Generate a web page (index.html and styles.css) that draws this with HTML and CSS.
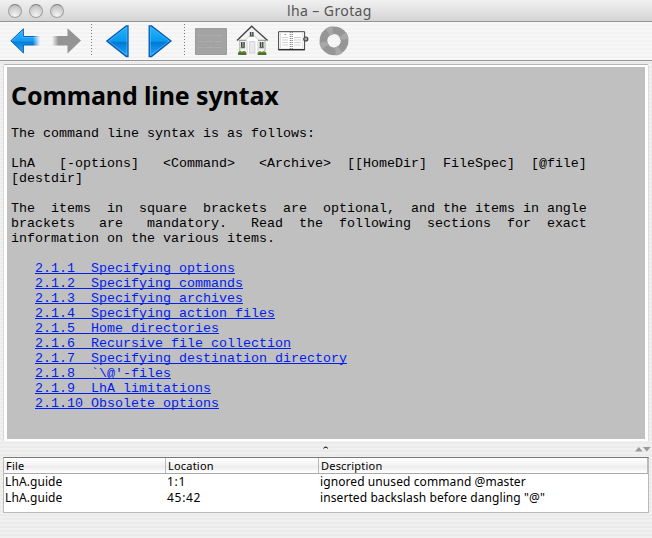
FILE: index.html
```html
<!DOCTYPE html>
<html lang="en">
<head>
<meta charset="utf-8">
<title>lha – Grotag</title>
<link rel="stylesheet" href="styles.css">
</head>
<body>
<div class="window">
  <header class="titlebar">
    <div class="lights"><i></i><i></i><i></i></div>
    <span class="title">lha – Grotag</span>
  </header>
  <nav class="toolbar">
    <svg class="back" width="30" height="26" viewBox="0 0 30 26">
      <defs>
        <linearGradient id="blue" x1="0" y1="0" x2="0" y2="1"><stop offset="0" stop-color="#35b8ff"/><stop offset=".5" stop-color="#1599ee"/><stop offset=".56" stop-color="#077fd8"/><stop offset="1" stop-color="#28adff"/></linearGradient>
        <linearGradient id="tail" x1="0" x2="1"><stop offset=".76" stop-color="#fff"/><stop offset="1" stop-color="#000"/></linearGradient>
        <mask id="fade"><rect width="30" height="26" fill="url(#tail)"/></mask>
      </defs>
      <g mask="url(#fade)"><path d="M.8 12.8 13.4.8V8.5H30V17H13.4v8Z" fill="url(#blue)" stroke="#0b62bd"/><path d="M2.3 12.8 12.4 3.2V9.5H30" fill="none" stroke="#4fbfff" stroke-width=".6"/></g>
    </svg>
    <svg class="forward" width="30" height="26" viewBox="0 0 30 26"><defs><linearGradient id="grey" x1="0" x2="1"><stop offset="0" stop-color="#949494" stop-opacity="0"/><stop offset=".22" stop-color="#949494"/></linearGradient></defs><path d="M0 8H15.5V.3L29 12.6 15.5 25.5V17.5H0Z" fill="url(#grey)"/></svg>
    <i class="divider"></i>
    <svg class="prev" width="24" height="33" viewBox="0 0 24 33"><defs><linearGradient id="tri" x1="0" y1="0" x2="0" y2="1"><stop offset="0" stop-color="#25b7ff"/><stop offset=".5" stop-color="#0898ee"/><stop offset=".54" stop-color="#0077d4"/><stop offset="1" stop-color="#20aaff"/></linearGradient></defs><path d="M.8 16 20.3.9H22V31.5H20.3Z" fill="url(#tri)" stroke="#0759b4" stroke-width="1.3"/><path d="M2.8 16 20.8 2V30Z" fill="none" stroke="#55b5f2" stroke-width=".7"/></svg>
    <svg class="next" width="24" height="33" viewBox="0 0 24 33"><path d="M23 16 3.5.9H1.2V31.5H3.5Z" fill="url(#tri)" stroke="#0759b4" stroke-width="1.3"/><path d="M21.2 16 2.5 2V30Z" fill="none" stroke="#55b5f2" stroke-width=".7"/></svg>
    <i class="divider second"></i>
    <svg class="contents" width="32" height="27" viewBox="0 0 32 27"><path d="M.5.5h31v26H.5Z" fill="#a3a3a3" stroke="#9c9c9c"/><path d="M3 7.5h4m1 0h7m1 0h11M3 13.5h6m1 0h8m2 0h7M3 19.5h5m2 0h8m1 0h8" stroke="#adadad"/></svg>
    <svg class="home" width="33" height="31" viewBox="0 0 33 31">
      <path d="M3.5 14.5 16 2 29.5 14.5V28H3.5Z" fill="#f4f4f5"/>
      <path d="M10 14.5 16 9 22.5 14.5V28H10Z" fill="#fff"/>
      <path d="M3 15.3h7.5m11.5 0h8" stroke="#8a8a8a"/>
      <path d="M3.8 15v11M29 15v11" stroke="#999" stroke-width=".8"/>
      <path d="M1 15.5 15.7 1.3 31.6 15.5" fill="none" stroke="#444" stroke-width="1.4"/>
      <path d="M9.7 14.8 16 9l6.8 5.8" fill="none" stroke="#b8b8bc" stroke-width=".7"/>
      <path d="M11 16v12m11-12v12" stroke="#ccc"/><path d="M13.5 16.5H19V28h-5.5Z" fill="#e9e9ec" stroke="#c6c6cc" stroke-width=".7"/>
      <path d="M13.8 7h3.8v4h-3.8ZM5 17h3.8v6H5Zm18.7 0h3.8v6h-3.8Z" fill="#454a46"/><path d="M15.7 7v3.5M6.9 17v5M25.6 17v5" stroke="#d5d5d5" stroke-width=".8"/><path d="M13.6 11.3h4.2M4.7 22.8h4.4M23.4 22.8h4.4" stroke="#6b8150"/>
      <path d="M2 29.4c-.5-2.8 2.2-4.4 4-2.5 1.7-2 4.7-.5 4.5 2.5Zm19.5 0c0-2.7 3-4.2 4.3-2.1 2-2.3 5-.3 4.6 2.1Z" fill="#5b8425"/><path d="M2.3 29.2h8m11.5 0h8.5" stroke="#30491c"/>
    </svg>
    <svg class="book" width="31" height="20" viewBox="0 0 31 20">
      <path d="M.6.7h26v18H.6Z" fill="#fff" stroke="#444"/><path d="M.3 18.6h26.5" stroke="#2c2c2c" stroke-width="1.4"/><path d="M2.5 1.8V17M24.8 1.8V17" stroke="#ddd"/>
      <path d="M4 6.5h6m6 0h7M4 9h6m6 0h7M4 11.5h6m6 0h7M4 14h6m6 0h7" stroke="#d2d2d2"/><path d="M6.5 3.5h1.5m10.500h1.500" stroke="#999"/><path d="M13.3 1v17" stroke="#777" stroke-width="3" stroke-dasharray=".9 1.1"/><path d="M13.3 1v17" stroke="#f2f2f2" stroke-width=".8"/><circle cx="27.8" cy="8" r="2" fill="#aaa" stroke="#444" stroke-width="1.2"/>
    </svg>
    <svg class="ring" width="32" height="32" viewBox="0 0 32 32"><circle cx="15" cy="15.8" r="10.6" fill="none" stroke="#969696" stroke-width="7.6"/><circle cx="15" cy="15.8" r="10.6" fill="none" stroke="#a8a8a8" stroke-width="8.4" pathLength="360" stroke-dasharray="27 63" stroke-dashoffset="35"/></svg>
  </nav>
  <main class="document">
    <h1>Command line syntax</h1>
<pre>The command line syntax is as follows:

LhA   [-options]   &lt;Command&gt;   &lt;Archive&gt;  [[HomeDir]  FileSpec]  [@file]
[destdir]

The  items  in  square  brackets  are  optional,  and the items in angle
brackets   are   mandatory.   Read  the  following  sections  for  exact
information on the various items.
</pre>
    <ul>
      <li><a>2.1.1  Specifying options</a></li>
      <li><a>2.1.2  Specifying commands</a></li>
      <li><a>2.1.3  Specifying archives</a></li>
      <li><a>2.1.4  Specifying action files</a></li>
      <li><a>2.1.5  Home directories</a></li>
      <li><a>2.1.6  Recursive file collection</a></li>
      <li><a>2.1.7  Specifying destination directory</a></li>
      <li><a>2.1.8  `\@'-files</a></li>
      <li><a>2.1.9  LhA limitations</a></li>
      <li><a>2.1.10 Obsolete options</a></li>
    </ul>
  </main>
  <div class="splitter">
    <svg class="grip" width="6" height="4" viewBox="0 0 6 4"><path d="M.3 3.4C.3-.4 5.1-.4 5.100 3.400L4 2H1.500Z" fill="#333"/></svg>
    <svg class="toggles" width="16" height="5" viewBox="0 0 16 5"><path d="M0 4.5 3.8 0l3.8 4.5ZM8 0h7.6l-3.8 4.5Z" fill="#999"/></svg>
  </div>
  <section class="messages">
    <div class="row head"><span>File</span><span>Location</span><span>Description</span></div>
    <div class="row"><span>LhA.guide</span><span class="pos">1:1</span><span>ignored unused command @master</span></div>
    <div class="row"><span>LhA.guide</span><span class="pos">45:42</span><span>inserted backslash before dangling "@"</span></div>
  </section>
</div>
</body>
</html>
```
FILE: styles.css
```css
* { box-sizing: border-box; }
body { margin: 0; overflow: hidden; }
.window {
  width: 652px; height: 538px;
  display: flex; flex-direction: column;
  background: repeating-linear-gradient(#f0f0f0 0 2px, #ebebeb 2px 4px);
  font-family: "Noto Sans", "Open Sans", sans-serif;
  color: #000;
}
.titlebar {
  height: 22px; flex: none;
  display: grid; grid-template-columns: 287px 1fr; align-items: center;
  background: linear-gradient(#f0f0f0, #e4e4e4 45%, #d4d4d4);
  border-bottom: 1px solid #969696;
  border-radius: 4px 4px 0 0;
}
.lights { display: flex; gap: 7px; padding-left: 8px; }
.lights i {
  width: 14px; height: 14px; border-radius: 50%;
  border: 1px solid #a0a0a0; border-top-color: #808080;
  background: radial-gradient(circle at 50% 85%, #f4f4f4, #d2d2d2 55%, #b2b2b2);
}
.title { font-size: 14px; line-height: 20px; letter-spacing: .4px; color: #555; white-space: nowrap; }
.toolbar {
  height: 39px; flex: none;
  display: flex; align-items: flex-start;
  background: repeating-linear-gradient(#f7f7f7 0 2px, #f3f3f3 2px 4px);
  border-bottom: 1px solid #969696;
}
.toolbar svg { display: block; flex: none; }
.back { margin: 6px 0 0 10px; }
.forward { margin: 6px 0 0 12px; }
.divider { width: 1px; height: 32px; margin: 2px 0 0 9px; background: repeating-linear-gradient(#777 0 1px, transparent 1px 3px); }
.prev { margin: 3px 0 0 14px; }
.next { margin: 3px 0 0 18px; }
.second { margin-left: 12px; }
.contents { margin: 6px 0 0 10px; }
.home { margin: 3px 0 0 9px; }
.book { margin: 9px 0 0 9px; }
.ring { margin: 3px 0 0 10px; }
.document {
  height: 376px; flex: none;
  margin: 4px 4px 0; padding: 15px 4px 0;
  border: solid #fff; border-width: 2px 3px;
  background: #c0c0c0;
  box-shadow: 0 -1px #b5b5b5, -1px 0 #d8d8d8, 1px 0 #ddd;
  font: 13.333px/15px "Liberation Mono", monospace;
}
.document h1 {
  margin: 0; height: 44px;
  font: 700 25px/27px "Noto Sans", "Open Sans", sans-serif;
  letter-spacing: -.12px; white-space: nowrap;
}
.document pre { margin: 0 0 15px; font: inherit; }
.document ul { list-style: none; margin: 0; padding: 0 0 0 24px; }
.document li { height: 15px; white-space: pre; }
.document a {
  color: #0020f0;
  text-decoration: underline; text-decoration-thickness: 1px;
  text-underline-offset: 1px; text-decoration-skip-ink: none;
}
.splitter { height: 16px; flex: none; display: flex; justify-content: space-between; padding: 5px 1px 0 323px; }
.toggles { margin-top: 1px; }
.messages {
  height: 56px; flex: none; margin: 0 3px;
  background: #fff;
  border: 1px solid #bbb; border-top-color: #777;
  font-size: 12px;
}
.row { height: 16px; display: grid; grid-template-columns: 162px 153px 1fr; line-height: 16px; letter-spacing: .09px; }
.row span { padding-left: 1px; white-space: nowrap; }
.row .pos { letter-spacing: .7px; }
.row.head {
  font-size: 11px; line-height: 15px; letter-spacing: .2px;
  background: linear-gradient(#fff, #f4f4f4 45%, #ececec 55%, #fff);
  border-bottom: 1px solid #aaa;
}
.head span { padding-left: 2px; border-right: 1px solid #bbb; }
```
